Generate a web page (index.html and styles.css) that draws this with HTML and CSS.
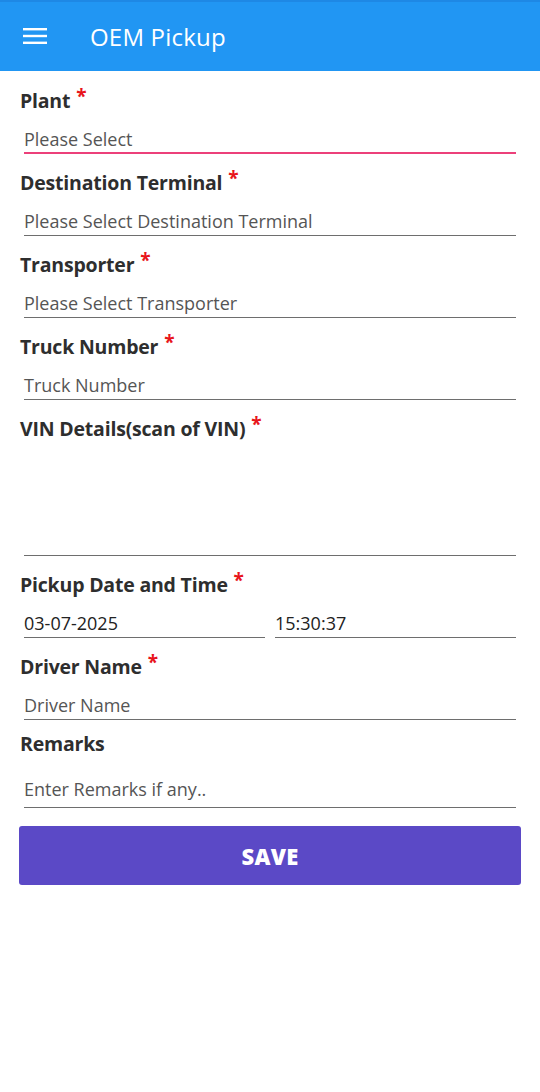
FILE: index.html
```html
<!DOCTYPE html>
<html>
<head>
<meta charset="utf-8">
<link rel="stylesheet" href="styles.css">
</head>
<body>
<header class="appbar">
  <svg class="menu" width="24" height="18" viewBox="0 0 24 18"><rect x="0" y="1" width="24" height="2.4" fill="#fff"/><rect x="0" y="7.8" width="24" height="2.4" fill="#fff"/><rect x="0" y="14.6" width="24" height="2.4" fill="#fff"/></svg>
  <h1 class="title">OEM Pickup</h1>
</header>
<main class="form">
  <div class="field">
    <div class="label">Plant <span class="req">*</span></div>
    <div class="input focused placeholder">Please Select</div>
  </div>
  <div class="field">
    <div class="label">Destination Terminal <span class="req">*</span></div>
    <div class="input placeholder">Please Select Destination Terminal</div>
  </div>
  <div class="field">
    <div class="label">Transporter <span class="req">*</span></div>
    <div class="input placeholder">Please Select Transporter</div>
  </div>
  <div class="field">
    <div class="label">Truck Number <span class="req">*</span></div>
    <div class="input placeholder">Truck Number</div>
  </div>
  <div class="field">
    <div class="label">VIN Details(scan of VIN) <span class="req">*</span></div>
    <div class="input area"></div>
  </div>
  <div class="field">
    <div class="label">Pickup Date and Time <span class="req">*</span></div>
    <div class="pair">
      <div class="input value">03-07-2025</div>
      <div class="input value">15:30:37</div>
    </div>
  </div>
  <div class="field">
    <div class="label">Driver Name <span class="req">*</span></div>
    <div class="input placeholder">Driver Name</div>
  </div>
  <div class="field">
    <div class="label">Remarks</div>
    <div class="input placeholder tall">Enter Remarks if any..</div>
  </div>
  <button class="save">SAVE</button>
</main>
</body>
</html>
```
FILE: styles.css
```css
* { box-sizing: border-box; }
html, body { margin: 0; padding: 0; background: #fff; }
body { font-family: "Open Sans", "Noto Sans", sans-serif; color: #333; width: 540px; height: 1092px; overflow: hidden; }
.appbar {
  height: 71px;
  background: #2196f3;
  border-top: 2px solid #1e88e5;
  display: flex;
  align-items: center;
  padding-left: 23px;
}
.menu { display: block; margin-top: -2px; }
.title {
  margin: 0 0 0 43px;
  font-size: 24px;
  font-weight: 400;
  color: #fff;
  letter-spacing: 0.2px;
}
.form {
  padding: 17px 19px 0 19px;
  display: flex;
  flex-direction: column;
  gap: 16px;
}
.field { display: flex; flex-direction: column; }
.label {
  height: 24px;
  line-height: 16px;
  font-size: 19.5px;
  font-weight: 700;
  color: #2e2e2e;
  padding-left: 1px;
  letter-spacing: -0.2px;
}
.req {
  color: #e8141b;
  font-size: 19px;
  vertical-align: 5px;
  font-weight: 700;
  margin-left: 1px;
}
.input {
  margin: 0 5px 0 5px;
  height: 42px;
  padding-top: 16px;
  line-height: 22px;
  font-size: 18px;
  border-bottom: 1px solid #6e6e6e;
  color: #555;
}
.input.focused { border-bottom: 2px solid #ec407a; }
.input.value { color: #222; }
.input.area { height: 116px; }
.input.tall { height: 48px; padding-top: 18px; }
.pair { display: flex; gap: 10px; margin: 0 5px; }
.pair .input { flex: 1; margin: 0; }
.save {
  margin-top: 2px;
  height: 59px;
  width: 502px;
  border: none;
  border-radius: 3px;
  background: #5b49c6;
  color: #fff;
  font-family: "Open Sans", "Noto Sans", sans-serif;
  font-size: 22px;
  font-weight: 800;
  letter-spacing: 0.3px;
}
```
